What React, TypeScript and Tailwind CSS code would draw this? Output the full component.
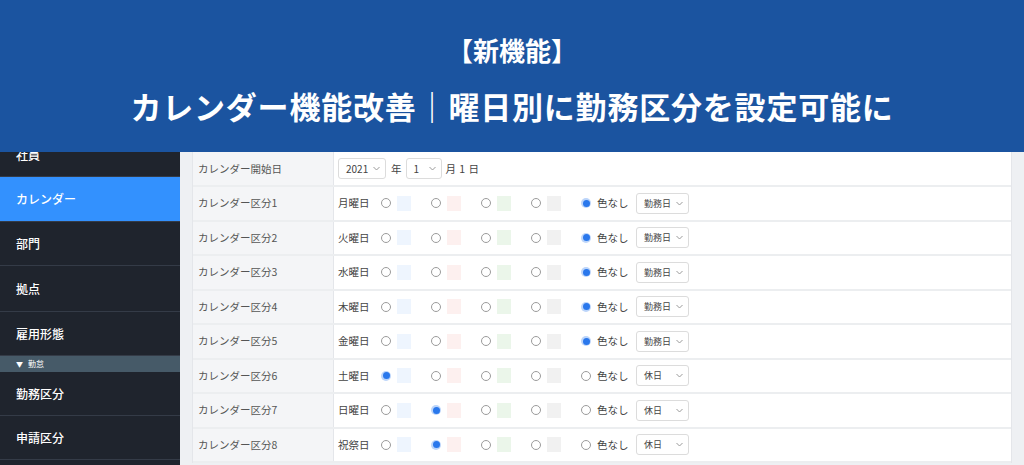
import React from "react";

const font = { fontFamily: '"Noto Sans CJK JP", "Noto Sans", sans-serif' };

const sideItems = [
  { label: "社員", h: "h-[44px]" },
  { label: "カレンダー", h: "h-[45px]", active: true },
  { label: "部門", h: "h-[44px]" },
  { label: "拠点", h: "h-[46px]" },
  { label: "雇用形態", h: "h-[44px]" },
];

const rows = [
  { name: "カレンダー区分1", day: "月曜日", checked: 4, kind: "勤務日" },
  { name: "カレンダー区分2", day: "火曜日", checked: 4, kind: "勤務日" },
  { name: "カレンダー区分3", day: "水曜日", checked: 4, kind: "勤務日" },
  { name: "カレンダー区分4", day: "木曜日", checked: 4, kind: "勤務日" },
  { name: "カレンダー区分5", day: "金曜日", checked: 4, kind: "勤務日" },
  { name: "カレンダー区分6", day: "土曜日", checked: 0, kind: "休日" },
  { name: "カレンダー区分7", day: "日曜日", checked: 1, kind: "休日" },
  { name: "カレンダー区分8", day: "祝祭日", checked: 1, kind: "休日" },
];

const swatches = ["bg-[#eef5fe]", "bg-[#fdf0ef]", "bg-[#ebf6ea]", "bg-[#f1f1f1]"];

function Chevron() {
  return (
    <svg width="7" height="5" viewBox="0 0 7 5" className="shrink-0">
      <polyline points="0.5,1 3.5,4 6.5,1" fill="none" stroke="#9a9a9a" strokeWidth="1" />
    </svg>
  );
}

function Radio({ on }: { on: boolean }) {
  if (on) {
    return (
      <span className="w-[10px] h-[10px] rounded-full bg-[#bcd5fa] flex items-center justify-center shrink-0">
        <span className="w-[7px] h-[7px] rounded-full bg-[#2a78ec]" />
      </span>
    );
  }
  return <span className="w-[10px] h-[10px] rounded-full border border-[#9b9b9b] bg-white shrink-0" />;
}

function Select({ text, w, size = "text-[10px]" }: { text: string; w: string; size?: string }) {
  return (
    <div className={`${w} ${size} h-[21px] border border-[#dcdcdc] rounded-[3px] bg-white flex items-center justify-between pl-[7px] pr-[5px] text-[#444]`}>
      <span>{text}</span>
      <Chevron />
    </div>
  );
}

function Row({ label, first, children }: { label: string; first?: boolean; children: React.ReactNode }) {
  return (
    <div className={`flex border-b-2 border-[#eceef0] ${first ? "h-[35px]" : "h-[34.5px]"}`}>
      <div className="w-[141px] shrink-0 bg-[#f4f5f7] border-r border-[#e4e6ea] flex items-center pl-[5px] text-[10.5px] text-[#555]">
        {label}
      </div>
      <div className="flex-1 bg-white flex items-center pl-[4px] text-[10.5px] text-[#444]">{children}</div>
    </div>
  );
}

export default function App() {
  return (
    <div style={font} className="w-[1024px] h-[465px] overflow-hidden bg-[#eef0f3] flex flex-col">
      <header className="h-[152px] shrink-0 bg-[#1b54a0] flex flex-col items-center text-white font-bold relative z-10">
        <div className="mt-[31px] text-[26px] leading-[38px]">【新機能】</div>
        <div className="mt-[17px] text-[31px] leading-[40px] tracking-[0.8px]">
          カレンダー機能改善｜曜日別に勤務区分を設定可能に
        </div>
      </header>

      <div className="flex flex-1 overflow-hidden">
        <aside className="w-[180px] shrink-0 bg-[#1f242d]">
          <div className="-mt-[19px]">
            {sideItems.map((it) => (
              <div
                key={it.label}
                className={`${it.h} flex items-center pl-[16px] text-[12px] font-medium text-white border-b border-[#343b47] ${it.active ? "bg-[#3391fe]" : ""}`}
              >
                {it.label}
              </div>
            ))}
            <div className="h-[16px] bg-[#465a68] flex items-center pl-[16px] gap-[5px] text-[8px] text-white">
              <span className="text-[7px]">▼</span>
              <span>勤怠</span>
            </div>
            {["勤務区分", "申請区分"].map((l) => (
              <div key={l} className="h-[44px] flex items-center pl-[16px] text-[12px] font-medium text-white border-b border-[#343b47]">
                {l}
              </div>
            ))}
          </div>
        </aside>

        <main className="flex-1 pl-[12px] pr-[12px]">
          <div className="border-l border-r border-[#e4e6ea]">
            <Row label="カレンダー開始日" first>
              <Select text="2021" w="w-[48px]" />
              <span className="ml-[5px]">年</span>
              <div className="ml-[4px]">
                <Select text="1" w="w-[36px]" />
              </div>
              <span className="ml-[4px] tracking-[0.5px]">月 1 日</span>
            </Row>
            {rows.map((r) => (
              <Row key={r.name} label={r.name}>
                <span className="w-[43px] shrink-0">{r.day}</span>
                {swatches.map((s, i) => (
                  <div key={s} className="w-[50px] shrink-0 flex items-center">
                    <Radio on={r.checked === i} />
                    <span className={`ml-[6px] w-[14px] h-[15px] ${s}`} />
                  </div>
                ))}
                <div className="w-[55px] shrink-0 flex items-center">
                  <Radio on={r.checked === 4} />
                  <span className="ml-[6px]">色なし</span>
                </div>
                <Select text={r.kind} w="w-[53px]" size="text-[9px]" />
              </Row>
            ))}
          </div>
        </main>
      </div>
    </div>
  );
}
